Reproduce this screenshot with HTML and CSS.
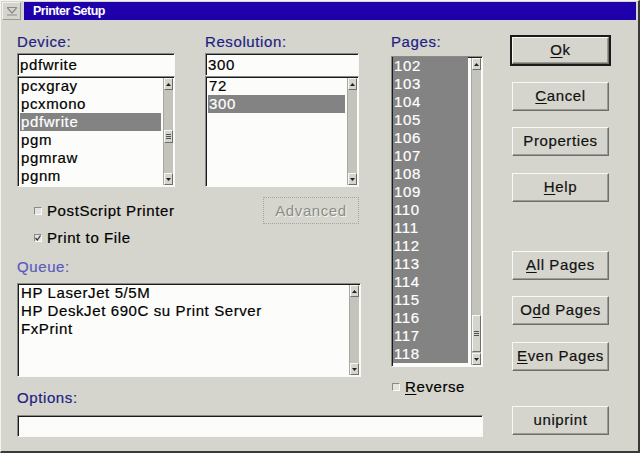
FILE: index.html
```html
<!DOCTYPE html>
<html>
<head>
<meta charset="utf-8">
<link rel="stylesheet" href="styles.css">
</head>
<body>
<div class="window">
  <div class="titlerow">
    <div class="winicon">
      <svg width="12" height="10" viewBox="0 0 12 10"><path d="M1 1.5 H11 M1.5 2 L6 7 L10.5 2 M1 9 H11" fill="none" stroke="#8c8c8c" stroke-width="1.2"/></svg>
    </div>
    <div class="title">Printer Setup</div>
  </div>
  <div class="content">
    <div class="leftpart">
      <div class="upper">
        <div class="leftsub">
          <div class="toprow">
            <div class="field devcol">
              <div class="label">Device:</div>
              <div class="entry">pdfwrite</div>
              <div class="listbox devlist">
                <div class="items">
                  <div class="row">pcxgray</div>
                  <div class="row">pcxmono</div>
                  <div class="row sel">pdfwrite</div>
                  <div class="row">pgm</div>
                  <div class="row">pgmraw</div>
                  <div class="row">pgnm</div>
                </div>
                <div class="scroll">
                  <div class="sbtn"><svg width="5" height="3" viewBox="0 0 5 3"><path d="M0 3 L2.5 0 L5 3Z" fill="#202020"/></svg></div>
                  <div class="track"><div class="thumb" style="margin-top:40px;height:13px"><span></span><span></span><span></span></div></div>
                  <div class="sbtn"><svg width="5" height="3" viewBox="0 0 5 3"><path d="M0 0 L2.5 3 L5 0Z" fill="#202020"/></svg></div>
                </div>
              </div>
            </div>
            <div class="field rescol">
              <div class="label">Resolution:</div>
              <div class="entry">300</div>
              <div class="listbox reslist">
                <div class="items">
                  <div class="row">72</div>
                  <div class="row sel">300</div>
                </div>
                <div class="scroll">
                  <div class="sbtn"><svg width="5" height="3" viewBox="0 0 5 3"><path d="M0 3 L2.5 0 L5 3Z" fill="#202020"/></svg></div>
                  <div class="track"></div>
                  <div class="sbtn"><svg width="5" height="3" viewBox="0 0 5 3"><path d="M0 0 L2.5 3 L5 0Z" fill="#202020"/></svg></div>
                </div>
              </div>
            </div>
          </div>
          <div class="opts">
            <div class="checks">
              <div class="check"><span class="box"></span><span>PostScript Printer</span></div>
              <div class="check"><span class="box"><svg width="6" height="6" viewBox="0 0 6 6"><path d="M0.5 3 L2.3 5 L5.5 0.5" fill="none" stroke="#303030" stroke-width="1.2"/></svg></span><span>Print to File</span></div>
            </div>
            <div class="advanced">Advanced</div>
          </div>
          <div class="label queue-label">Queue:</div>
          <div class="listbox queuelist">
            <div class="items">
              <div class="row">HP LaserJet 5/5M</div>
              <div class="row">HP DeskJet 690C su Print Server</div>
              <div class="row">FxPrint</div>
            </div>
            <div class="scroll">
              <div class="sbtn"><svg width="5" height="3" viewBox="0 0 5 3"><path d="M0 3 L2.5 0 L5 3Z" fill="#202020"/></svg></div>
              <div class="track"></div>
              <div class="sbtn"><svg width="5" height="3" viewBox="0 0 5 3"><path d="M0 0 L2.5 3 L5 0Z" fill="#202020"/></svg></div>
            </div>
          </div>
          <div class="label options-label">Options:</div>
        </div>
        <div class="pagescol">
          <div class="label">Pages:</div>
          <div class="listbox pagelist">
            <div class="items">
              <div class="row sel">102</div>
              <div class="row sel">103</div>
              <div class="row sel">104</div>
              <div class="row sel">105</div>
              <div class="row sel">106</div>
              <div class="row sel">107</div>
              <div class="row sel">108</div>
              <div class="row sel">109</div>
              <div class="row sel">110</div>
              <div class="row sel">111</div>
              <div class="row sel">112</div>
              <div class="row sel">113</div>
              <div class="row sel">114</div>
              <div class="row sel">115</div>
              <div class="row sel">116</div>
              <div class="row sel">117</div>
              <div class="row sel">118</div>
            </div>
            <div class="scroll">
              <div class="sbtn"><svg width="5" height="3" viewBox="0 0 5 3"><path d="M0 3 L2.5 0 L5 3Z" fill="#202020"/></svg></div>
              <div class="track"><div class="thumb" style="margin-top:245px;height:37px"><span></span><span></span><span></span></div></div>
              <div class="sbtn"><svg width="5" height="3" viewBox="0 0 5 3"><path d="M0 0 L2.5 3 L5 0Z" fill="#202020"/></svg></div>
            </div>
          </div>
          <div class="check reverse"><span class="box"></span><span><u>R</u>everse</span></div>
        </div>
      </div>
      <div class="entry options-entry"></div>
    </div>
    <div class="buttons">
      <div class="okframe"><div class="btn ok"><u>O</u>k</div></div>
      <div class="btn cancel"><u>C</u>ancel</div>
      <div class="btn props">Properties</div>
      <div class="btn help"><u>H</u>elp</div>
      <div class="btn allp"><u>A</u>ll Pages</div>
      <div class="btn oddp">O<u>d</u>d Pages</div>
      <div class="btn evenp"><u>E</u>ven Pages</div>
      <div class="btn uni">uniprint</div>
    </div>
  </div>
</div>
</body>
</html>
```
FILE: styles.css
```css
* { box-sizing: border-box; }
body {
  margin: 0;
  background: #d5d5cd;
  font-family: "Liberation Sans", Arial, sans-serif;
  font-size: 15px;
  letter-spacing: 0.6px;
  color: #000;
  -webkit-text-stroke: 0.2px;
}
.window {
  width: 640px;
  height: 453px;
  background: #d5d5cd;
  border-top: 1px solid #f4f4f0;
  border-left: 1px solid #f4f4f0;
  border-right: 2px solid #3a3a3a;
  border-bottom: 2px solid #3a3a3a;
  overflow: hidden;
}
.titlerow {
  display: flex;
  gap: 3px;
  height: 19px;
  padding: 1px 2px 0 1px;
}
.winicon {
  width: 19px;
  display: flex;
  align-items: center;
  justify-content: center;
  border: 1px solid;
  border-color: #f0f0ec #9a9a94 #9a9a94 #f0f0ec;
}
.title {
  flex: 1;
  background: #2000aa;
  color: #fff;
  font-weight: bold;
  font-size: 12.5px;
  letter-spacing: -0.5px;
  line-height: 18px;
  padding-left: 9px;
  -webkit-text-stroke: 0;
}
.content {
  display: flex;
  padding: 13px 0 0 16px;
}
.leftpart {
  width: 466px;
  display: flex;
  flex-direction: column;
}
.upper {
  display: flex;
  gap: 30px;
}
.leftsub {
  width: 344px;
  display: flex;
  flex-direction: column;
}
.toprow {
  display: flex;
  gap: 30px;
}
.field {
  display: flex;
  flex-direction: column;
}
.devcol { width: 158px; }
.rescol { width: 154px; }
.label {
  height: 18px;
  line-height: 18px;
  color: #1e1e84;
}
.entry {
  margin-top: 2px;
  height: 23px;
  background: #fcfcfa;
  border: 1px solid;
  border-color: #8a8a86 #fafaf8 #fafaf8 #8a8a86;
  box-shadow: inset 1px 1px 0 #1a1a1a;
  line-height: 21px;
  padding-left: 2px;
}
.listbox {
  height: 111px;
  background: #fcfcfa;
  border: 1px solid;
  border-color: #8a8a86 #fafaf8 #fafaf8 #8a8a86;
  box-shadow: inset 1px 1px 0 #1a1a1a;
  display: flex;
}
.items {
  flex: 1;
  padding-left: 2px;
  overflow: hidden;
}
.row {
  height: 18px;
  line-height: 18px;
  padding-left: 1px;
  white-space: nowrap;
}
.row.sel {
  background: #838383;
  color: #fff;
}
.scroll {
  width: 10px;
  margin: 1px 1px 1px 2px;
  display: flex;
  flex-direction: column;
  background: #c4c4bc;
  border-left: 1px solid #a8a8a2;
}
.sbtn {
  height: 12px;
  background: #d5d5cd;
  border: 1px solid;
  border-color: #f8f8f6 #6e6e6a #6e6e6a #f8f8f6;
  display: flex;
  align-items: center;
  justify-content: center;
}
.track {
  flex: 1;
  display: flex;
  flex-direction: column;
}
.thumb {
  background: #d5d5cd;
  border: 1px solid;
  border-color: #f8f8f6 #6e6e6a #6e6e6a #f8f8f6;
  display: flex;
  flex-direction: column;
  align-items: center;
  justify-content: center;
  gap: 1px;
}
.thumb span {
  width: 5px;
  height: 1px;
  background: #505050;
}
.opts {
  display: flex;
  justify-content: space-between;
  padding-left: 17px;
}
.checks {
  margin-top: 15px;
  display: flex;
  flex-direction: column;
  gap: 9px;
}
.check {
  display: flex;
  align-items: center;
  gap: 5px;
  height: 18px;
  line-height: 18px;
}
.box {
  width: 8px;
  height: 8px;
  background: #e4e4de;
  border: 1px solid;
  border-color: #8a8a86 #fafaf8 #fafaf8 #8a8a86;
  display: flex;
  align-items: center;
  justify-content: center;
}
.advanced {
  margin-top: 10px;
  margin-right: 2px;
  width: 96px;
  height: 27px;
  border: 1px dotted #a4a4a0;
  color: #8c8c88;
  text-shadow: 1px 1px 0 #f4f4f0;
  text-align: center;
  line-height: 25px;
  -webkit-text-stroke: 0;
}
.queue-label {
  margin-top: 11px;
  color: #5a5ac0;
}
.queuelist {
  margin-top: 7px;
  height: 94px;
}
.options-label {
  margin-top: 12px;
}
.pagescol {
  width: 92px;
  display: flex;
  flex-direction: column;
}
.pagelist {
  margin-top: 5px;
  height: 311px;
}
.pagelist .items {
  padding-left: 1px;
  padding-right: 1px;
}
.pagelist .row { padding-left: 1px; }
.reverse {
  margin-top: 11px;
  padding-left: 1px;
}
.options-entry {
  margin-top: 8px;
  height: 22px;
}
.buttons {
  margin-left: 27px;
  width: 101px;
  display: flex;
  flex-direction: column;
  align-items: center;
}
.btn {
  width: 97px;
  height: 29px;
  background: #d5d5cd;
  border: 1px solid;
  border-color: #f8f8f6 #6e6e6a #6e6e6a #f8f8f6;
  box-shadow: inset -1px -1px 0 #9a9a96;
  text-align: center;
  line-height: 26px;
  color: #111;
}
.okframe {
  margin-top: 2px;
  width: 101px;
  height: 31px;
  border: 2px solid #1a1a1a;
  display: flex;
  align-items: center;
  justify-content: center;
}
.okframe .btn {
  width: 97px;
  height: 27px;
  line-height: 24px;
}
.cancel { margin-top: 16px; }
.props { margin-top: 16px; }
.help { margin-top: 17px; }
.allp { margin-top: 49px; }
.oddp { margin-top: 16px; }
.evenp { margin-top: 17px; }
.uni { margin-top: 35px; }
u { text-underline-offset: 2px; }
```
